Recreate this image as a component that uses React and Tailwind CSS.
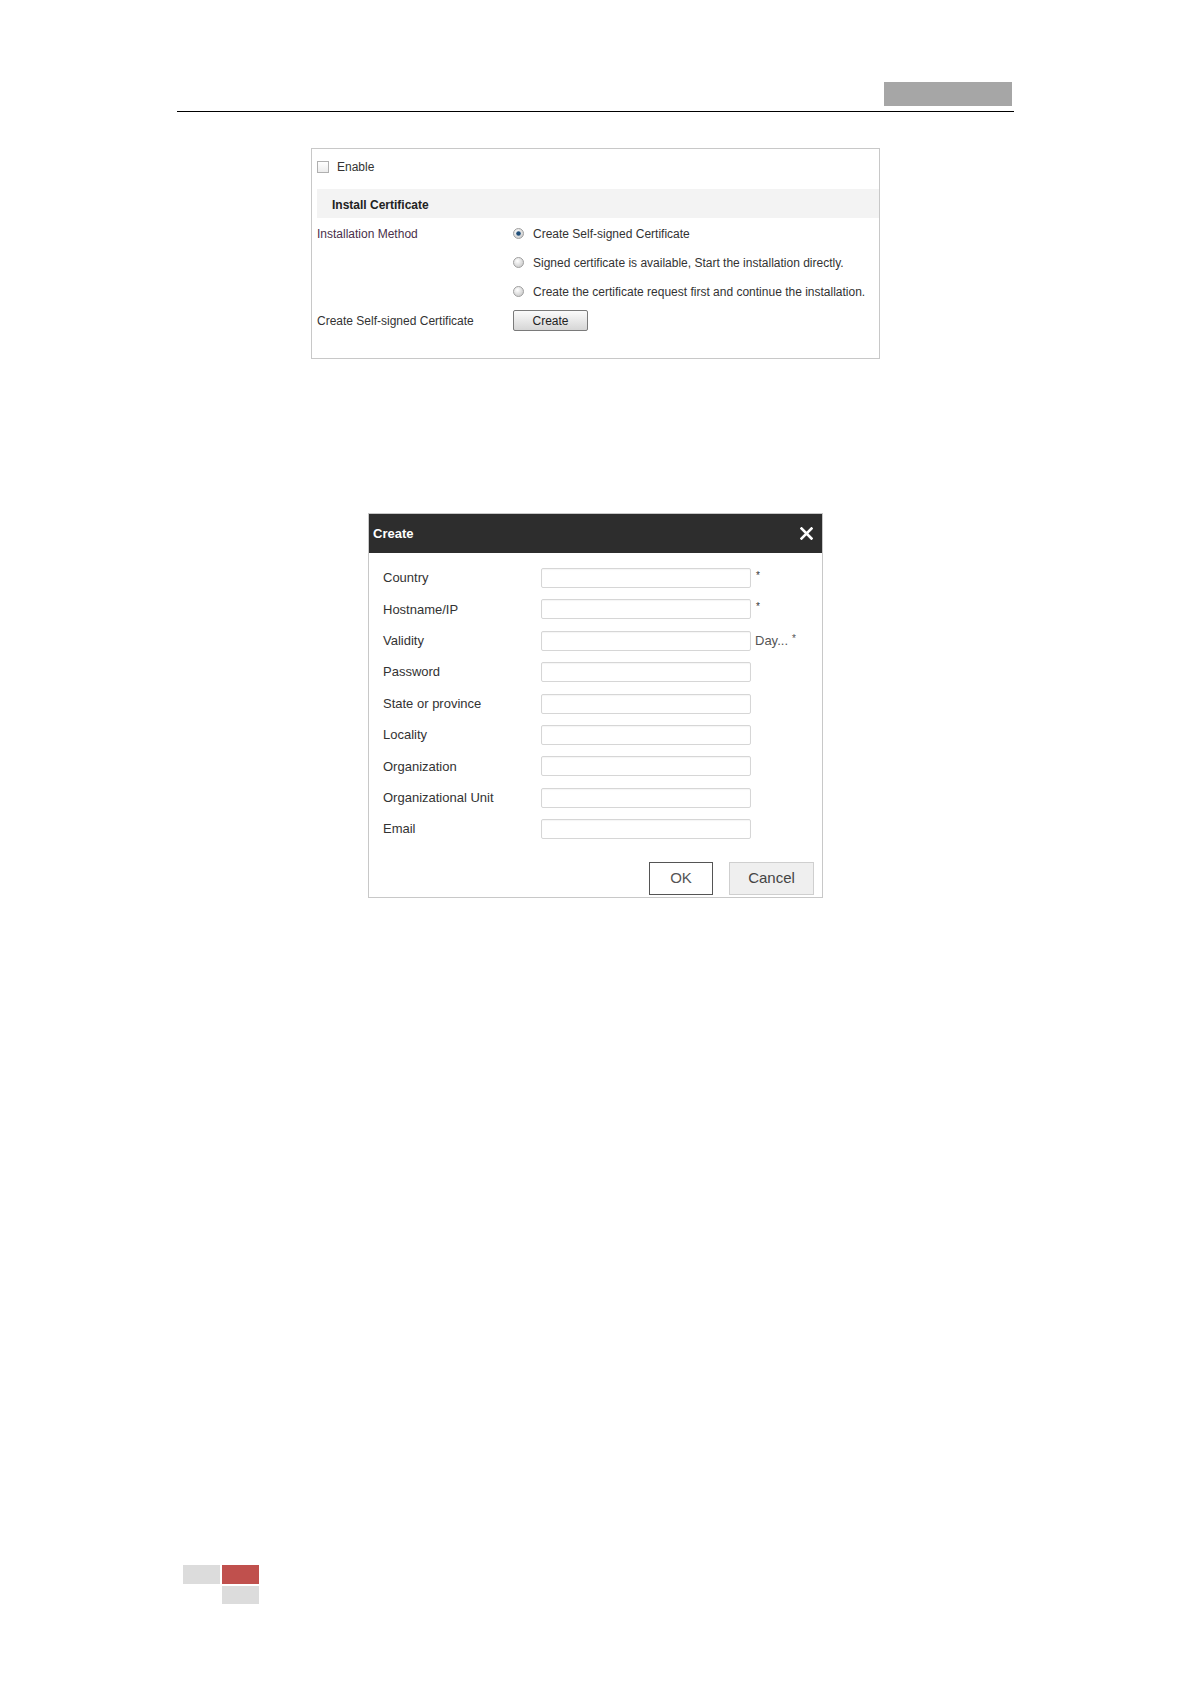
import React from "react";

function Radio({ checked }) {
  return (
    <svg width="11" height="11" viewBox="0 0 11 11" className="shrink-0">
      <defs>
        <radialGradient id={checked ? "rg1" : "rg0"} cx="40%" cy="35%" r="70%">
          <stop offset="0%" stopColor="#ffffff" />
          <stop offset="100%" stopColor="#c8c8c8" />
        </radialGradient>
      </defs>
      <circle cx="5.5" cy="5.5" r="5" fill={`url(#${checked ? "rg1" : "rg0"})`} stroke="#a0a0a0" strokeWidth="1" />
      {checked && <circle cx="5.5" cy="5.5" r="2.3" fill="#1f4e79" />}
    </svg>
  );
}

function Field({ label, suffix }) {
  return (
    <div className="flex h-[20px] items-center">
      <div className="w-[158px] text-[13px] text-[#333]">{label}</div>
      <div className="h-[20px] w-[210px] rounded-[2px] border border-[#d6d6d6] bg-white shadow-[inset_0_1px_1px_rgba(0,0,0,0.04)]" />
      {suffix === "star" && <span className="ml-[5px] -mt-[4px] text-[10px] leading-[12px] text-[#333]">*</span>}
      {suffix === "day" && (
        <span className="ml-[4px] flex items-center text-[13px] text-[#555]">
          Day...
          <span className="ml-[4px] -mt-[3px] text-[10px] leading-[12px]">*</span>
        </span>
      )}
    </div>
  );
}

export default function App() {
  return (
    <div className="relative h-[1684px] w-[1191px] bg-white" style={{ fontFamily: '"Liberation Sans", Arial, sans-serif' }}>
      {/* header */}
      <div className="ml-[177px] w-[837px] pt-[82px]">
        <div className="flex justify-end pr-[2px]">
          <div className="h-[24px] w-[128px] bg-[#a6a6a6]" />
        </div>
        <div className="mt-[5px] h-px bg-black" />
      </div>

      {/* certificate panel */}
      <div className="ml-[311px] mt-[36px] h-[211px] w-[569px] border border-[#c8c8c8] pl-[5px] text-[12px] text-[#333]">
        <div className="flex h-[36px] items-center">
          <div className="h-[12px] w-[12px] border border-[#b0b0b0] bg-gradient-to-b from-white to-[#ececec]" />
          <span className="ml-[8px]">Enable</span>
        </div>
        <div className="mt-[4px] flex h-[29px] items-center bg-[#f3f3f3] pl-[15px] pt-[2px] font-bold text-[#222]">
          Install Certificate
        </div>
        <div className="mt-[1px] flex">
          <div className="h-[29px] w-[196px] pt-[9px] leading-[12px] text-[#4a2f4a]">Installation Method</div>
          <div className="flex flex-col">
            {[
              ["Create Self-signed Certificate", true],
              ["Signed certificate is available, Start the installation directly.", false],
              ["Create the certificate request first and continue the installation.", false],
            ].map(([t, c]) => (
              <div key={t} className="flex h-[29px] items-center">
                <Radio checked={c} />
                <span className="ml-[9px]">{t}</span>
              </div>
            ))}
          </div>
        </div>
        <div className="flex h-[29px] items-center">
          <div className="w-[196px]">Create Self-signed Certificate</div>
          <button className="h-[21px] w-[75px] rounded-[2px] border border-[#7a7a7a] bg-gradient-to-b from-[#fbfbfb] to-[#d6d6d6] text-[12px] text-[#222]">
            Create
          </button>
        </div>
      </div>

      {/* create dialog */}
      <div className="ml-[368px] mt-[154px] h-[385px] w-[455px] border border-[#c8c8c8] bg-white">
        <div className="flex h-[39px] items-center justify-between bg-[#2d2d2d] pl-[4px] pr-[9px]">
          <span className="text-[13px] font-bold text-white">Create</span>
          <svg width="13" height="13" viewBox="0 0 13 13">
            <path d="M1.5 1.5 L11.5 11.5 M11.5 1.5 L1.5 11.5" stroke="#fff" strokeWidth="2.6" strokeLinecap="square" />
          </svg>
        </div>
        <div className="flex flex-col gap-[11.4px] pl-[14px] pt-[15px]">
          <Field label="Country" suffix="star" />
          <Field label="Hostname/IP" suffix="star" />
          <Field label="Validity" suffix="day" />
          <Field label="Password" />
          <Field label="State or province" />
          <Field label="Locality" />
          <Field label="Organization" />
          <Field label="Organizational Unit" />
          <Field label="Email" />
        </div>
        <div className="mt-[23px] flex justify-end gap-[16px] pr-[8px]">
          <button className="h-[33px] w-[64px] border border-[#555] bg-white text-[15px] text-[#555]">OK</button>
          <button className="h-[33px] w-[85px] border border-[#cfcfcf] bg-[#efefef] text-[15px] text-[#444]">Cancel</button>
        </div>
      </div>

      {/* footer squares */}
      <div className="ml-[183px] mt-[667px] flex flex-col gap-[2px]">
        <div className="flex gap-[2px]">
          <div className="h-[19px] w-[37px] bg-[#dcdcdc]" />
          <div className="h-[19px] w-[37px] bg-[#c0504d]" />
        </div>
        <div className="ml-[39px] h-[18px] w-[37px] bg-[#dcdcdc]" />
      </div>
    </div>
  );
}
